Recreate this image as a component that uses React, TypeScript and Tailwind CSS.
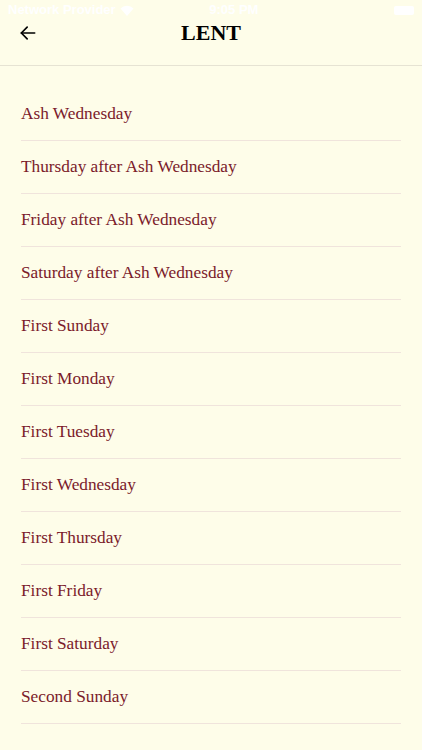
import React from 'react';

const days = [
    "Ash Wednesday",
    "Thursday after Ash Wednesday",
    "Friday after Ash Wednesday",
    "Saturday after Ash Wednesday",
    "First Sunday",
    "First Monday",
    "First Tuesday",
    "First Wednesday",
    "First Thursday",
    "First Friday",
    "First Saturday",
    "Second Sunday",
];

function App () {
    return (
        <div className="h-[750px] w-[422px] overflow-hidden bg-[#fefde9]">
            <div className="flex h-[20px] items-center justify-between px-[8px] text-[13px] font-semibold text-white" style={{ fontFamily: '"Liberation Sans", Arial, sans-serif' }}>
                <div className="flex items-center gap-1">
                    <span>Network Provider</span>
                    <svg width="14" height="11" viewBox="0 0 14 11" fill="white">
                        <path d="M7 11 L0.5 3.5 A9 9 0 0 1 13.5 3.5 Z" />
                    </svg>
                </div>
                <span className="-ml-[60px]">9:05 PM</span>
                <div className="h-[9px] w-[20px] rounded-[2px] bg-white" />
            </div>
            <header className="relative flex h-[46px] items-start justify-center border-b border-[#e6e3d3]">
                <button className="absolute left-[18px] top-[3px] text-black">
                    <svg width="20" height="20" viewBox="0 0 24 24" fill="none" stroke="currentColor" strokeWidth="2" strokeLinecap="round" strokeLinejoin="round">
                        <path d="M20 12H4" />
                        <path d="M11 5l-7 7 7 7" />
                    </svg>
                </button>
                <h1 className="mt-[-2px] text-[22px] font-bold leading-[30px] text-black" style={{ fontFamily: '"Liberation Serif", "Times New Roman", serif' }}>LENT</h1>
            </header>
            <ul className="px-[21px] pt-[22px]" style={{ fontFamily: '"Liberation Serif", "Times New Roman", serif' }}>
                {days.map((d) => (
                    <li key={d} className="flex h-[53px] items-center border-b border-[#f0e4dc] text-[17.3px] text-[#7b1b2b]">
                        {d}
                    </li>
                ))}
            </ul>
        </div>
    );
}

export default App;
